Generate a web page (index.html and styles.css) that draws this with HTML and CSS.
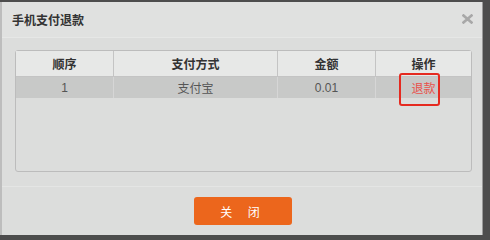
FILE: index.html
```html
<!DOCTYPE html>
<html lang="zh-CN">
<head>
    <meta charset="UTF-8">
    <title>手机支付退款</title>
    <link rel="stylesheet" href="styles.css">
</head>
<body>
    <div class="dialog">
        <div class="dialog-header">
            <span class="dialog-title">手机支付退款</span>
            <svg class="dialog-close" width="11" height="10" viewBox="0 0 11 10">
                <path d="M1.5 1.5 L9.5 8.5 M9.5 1.5 L1.5 8.5" stroke="#a8a8a8" stroke-width="2.6" stroke-linecap="square"/>
            </svg>
        </div>
        <div class="dialog-body">
            <div class="grid">
                <table>
                    <thead>
                        <tr>
                            <th class="col-seq">顺序</th>
                            <th class="col-way">支付方式</th>
                            <th class="col-amt">金额</th>
                            <th class="col-op">操作</th>
                        </tr>
                    </thead>
                    <tbody>
                        <tr class="row-selected">
                            <td>1</td>
                            <td>支付宝</td>
                            <td>0.01</td>
                            <td><span class="refund">退款<span class="mark"></span></span></td>
                        </tr>
                    </tbody>
                </table>
            </div>
        </div>
        <div class="dialog-footer">
            <button class="btn-close">关 闭</button>
        </div>
    </div>
</body>
</html>
```

FILE: styles.css
```css
/* Page */
body {
    margin: 0;
    background: #4d4d4d;
    font-family: 'Liberation Sans', 'Noto Sans CJK SC', sans-serif;
    font-size: 12px;
    color: #555;
}

.dialog {
    margin-top: 2px;
    width: 483px;
    height: 233px;
    background: #dcdddc;
    border-left: 2px solid #bdbdbd;
    border-right: 1px solid #9a9a9a;
    box-sizing: border-box;
    display: flex;
    flex-direction: column;
}

/* Header */
.dialog-header {
    height: 35px;
    display: flex;
    align-items: center;
    justify-content: space-between;
    padding: 0 9px 0 10px;
    background: #e0e1e0;
    border-bottom: 1px solid #e6e7e6;
}

.dialog-title {
    font-weight: bold;
    color: #333;
    font-size: 12px;
}

.dialog-close {
    margin-top: -1px;
}

/* Body */
.dialog-body {
    padding: 12px 10px 0 13px;
    height: 136px;
    border-bottom: 1px solid #e4e5e4;
}

.grid {
    width: 457px;
    height: 122px;
    border: 1px solid #bcbcbc;
    border-radius: 3px;
    box-sizing: border-box;
}

table {
    width: 100%;
    border-collapse: collapse;
    table-layout: fixed;
}

th {
    height: 25px;
    background: #e7e8e7;
    color: #333;
    font-weight: bold;
    border-right: 1px solid #c4c4c4;
    border-bottom: 1px solid #c4c4c4;
    padding: 0;
}

th:last-child,
td:last-child {
    border-right: none;
}

.col-seq { width: 97px; }
.col-way { width: 163px; }
.col-amt { width: 97px; }

td {
    height: 21px;
    text-align: center;
    padding: 0;
    border-right: 1px solid #d6d6d6;
}

.row-selected td {
    background: #c8c9c8;
}

.refund {
    position: relative;
    color: #e8504a;
    font-size: 12px;
}

.mark {
    position: absolute;
    left: -12px;
    top: -9px;
    width: 41px;
    height: 33px;
    border: 2px solid #e52a20;
    border-radius: 3px;
    box-sizing: border-box;
}

/* Footer */
.dialog-footer {
    display: flex;
    justify-content: center;
    padding-top: 10px;
    padding-left: 2px;
}

.btn-close {
    width: 98px;
    height: 28px;
    background: #ec661c;
    color: #fff;
    border: none;
    border-radius: 3px;
    font-family: 'Liberation Sans', 'Noto Sans CJK SC', sans-serif;
    font-size: 12px;
    letter-spacing: 6px;
    padding-left: 6px;
}
```
